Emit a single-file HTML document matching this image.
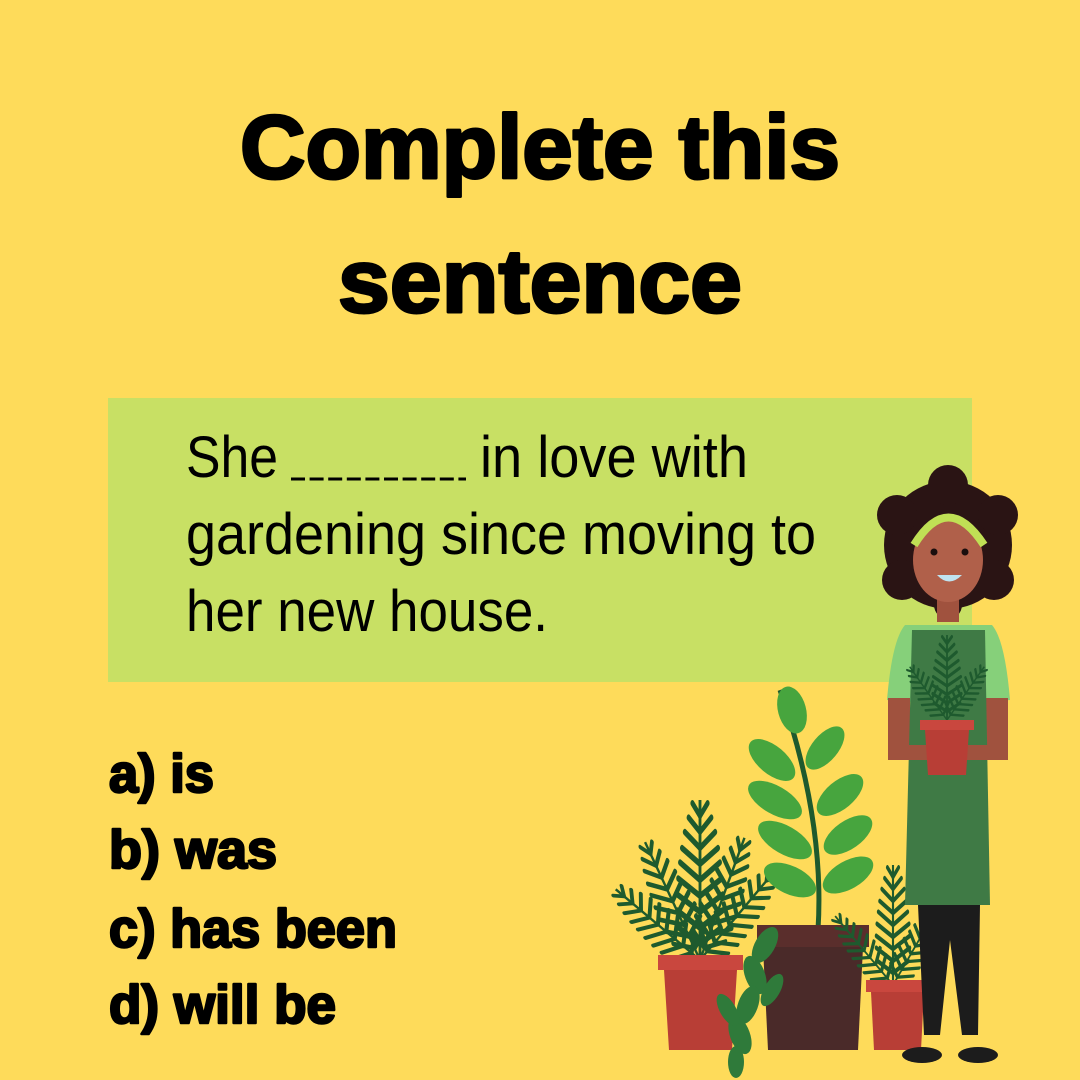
<!DOCTYPE html>
<html><head><meta charset="utf-8"><style>
html,body{margin:0;padding:0;background:#FEDB5A;}
svg{display:block}
</style></head><body>
<svg width="1080" height="1080" viewBox="0 0 1080 1080" xmlns="http://www.w3.org/2000/svg">
<defs>
<g id="frond">
<path d="M0 0 L0 -100" stroke="#1E5A2E" stroke-width="3" fill="none"/>
<g stroke="#1E5A2E" stroke-width="4" stroke-linecap="round">
<path d="M0 -10 l-22 -10 M0 -20 l-24 -11 M0 -30 l-24 -11 M0 -40 l-23 -11 M0 -50 l-21 -11 M0 -60 l-19 -10 M0 -70 l-16 -10 M0 -80 l-12 -9 M0 -90 l-8 -8"/>
<path d="M0 -10 l22 -10 M0 -20 l24 -11 M0 -30 l24 -11 M0 -40 l23 -11 M0 -50 l21 -11 M0 -60 l19 -10 M0 -70 l16 -10 M0 -80 l12 -9 M0 -90 l8 -8"/>
</g>
</g>
</defs>
<rect width="1080" height="1080" fill="#FEDB5A"/>
<g font-family="Liberation Sans, sans-serif" font-weight="bold" fill="#000" stroke="#000" stroke-width="3" stroke-linejoin="round">
<text x="240" y="178" font-size="90" textLength="600" lengthAdjust="spacingAndGlyphs">Complete this</text>
<text x="338" y="312" font-size="90" textLength="404" lengthAdjust="spacingAndGlyphs">sentence</text>
</g>
<rect x="108" y="398" width="864" height="284" fill="#C8E064"/>
<g font-family="Liberation Sans, sans-serif" font-size="58" fill="#000">
<text x="186" y="477" textLength="92" lengthAdjust="spacingAndGlyphs">She</text>
<text x="480" y="477" textLength="268" lengthAdjust="spacingAndGlyphs">in love with</text>
<text x="186" y="554" textLength="630" lengthAdjust="spacingAndGlyphs">gardening since moving to</text>
<text x="186" y="631" textLength="362" lengthAdjust="spacingAndGlyphs">her new house.</text>
</g>
<line x1="291" y1="479" x2="466" y2="479" stroke="#000" stroke-width="3" stroke-dasharray="14 4.6"/>
<g font-family="Liberation Sans, sans-serif" font-weight="bold" font-size="54" fill="#000" stroke="#000" stroke-width="2.5" stroke-linejoin="round">
<text x="109" y="792" textLength="105" lengthAdjust="spacingAndGlyphs">a) is</text>
<text x="109" y="868" textLength="168" lengthAdjust="spacingAndGlyphs">b) was</text>
<text x="109" y="947" textLength="288" lengthAdjust="spacingAndGlyphs">c) has been</text>
<text x="109" y="1023" textLength="227" lengthAdjust="spacingAndGlyphs">d) will be</text>
</g>

<!-- left palm -->
<use href="#frond" transform="translate(700 960) scale(0.95 1.6)"/>
<use href="#frond" transform="translate(700 960) rotate(-50) scale(0.8 1.1)"/>
<use href="#frond" transform="translate(700 960) rotate(40) scale(0.8 1.15)"/>
<use href="#frond" transform="translate(700 960) rotate(-25) scale(0.8 1.3)"/>
<use href="#frond" transform="translate(700 960) rotate(20) scale(0.8 1.3)"/>
<!-- left pot -->
<rect x="658" y="955" width="85" height="15" fill="#C9473E"/>
<path d="M664 970 L737 970 L732 1050 L669 1050Z" fill="#B83E36"/>
<!-- fiddle plant -->
<path d="M818 930 Q825 820 780 690" stroke="#1E5A2E" stroke-width="5" fill="none"/>
<g fill="#47A53E">
<ellipse cx="792" cy="710" rx="14" ry="24" transform="rotate(-15 792 710)"/>
<ellipse cx="772" cy="760" rx="14" ry="28" transform="rotate(-50 772 760)"/>
<ellipse cx="825" cy="748" rx="13" ry="26" transform="rotate(40 825 748)"/>
<ellipse cx="775" cy="800" rx="14" ry="30" transform="rotate(-60 775 800)"/>
<ellipse cx="840" cy="795" rx="14" ry="28" transform="rotate(50 840 795)"/>
<ellipse cx="785" cy="840" rx="14" ry="30" transform="rotate(-60 785 840)"/>
<ellipse cx="848" cy="835" rx="14" ry="28" transform="rotate(55 848 835)"/>
<ellipse cx="790" cy="880" rx="14" ry="28" transform="rotate(-65 790 880)"/>
<ellipse cx="848" cy="875" rx="14" ry="28" transform="rotate(60 848 875)"/>
</g>
<!-- dark pot -->
<rect x="757" y="925" width="112" height="22" fill="#5A2E2C"/>
<path d="M763 947 L863 947 L858 1050 L768 1050Z" fill="#4A2A29"/>
<!-- trailing vine -->
<g fill="#2F7A3A">
<ellipse cx="765" cy="945" rx="10" ry="20" transform="rotate(30 765 945)"/>
<ellipse cx="755" cy="975" rx="10" ry="20" transform="rotate(-20 755 975)"/>
<ellipse cx="748" cy="1005" rx="10" ry="20" transform="rotate(20 748 1005)"/>
<ellipse cx="740" cy="1035" rx="10" ry="20" transform="rotate(-20 740 1035)"/>
<ellipse cx="736" cy="1062" rx="8" ry="16"/>
<ellipse cx="772" cy="990" rx="8" ry="18" transform="rotate(30 772 990)"/>
<ellipse cx="728" cy="1010" rx="8" ry="18" transform="rotate(-30 728 1010)"/>
</g>
<!-- right palm -->
<use href="#frond" transform="translate(893 985) scale(0.7 1.2)"/>
<use href="#frond" transform="translate(893 985) rotate(-40) scale(0.6 0.9)"/>
<use href="#frond" transform="translate(893 985) rotate(30) scale(0.6 0.9)"/>
<rect x="866" y="980" width="62" height="12" fill="#C9473E"/>
<path d="M871 992 L924 992 L921 1050 L874 1050Z" fill="#B83E36"/>

<!-- woman -->
<circle cx="948" cy="545" r="64" fill="#2A1414"/>
<circle cx="897" cy="515" r="20" fill="#2A1414"/><circle cx="998" cy="515" r="20" fill="#2A1414"/>
<circle cx="902" cy="580" r="20" fill="#2A1414"/><circle cx="994" cy="580" r="20" fill="#2A1414"/>
<circle cx="948" cy="485" r="20" fill="#2A1414"/><circle cx="948" cy="605" r="14" fill="#2A1414"/>
<rect x="937" y="590" width="22" height="32" fill="#A0523E"/>
<ellipse cx="948" cy="560" rx="35" ry="42" fill="#B0604A"/>
<path d="M914 545 Q948 490 984 545" stroke="#C0E055" stroke-width="8" fill="none"/>
<circle cx="934" cy="552" r="3.5" fill="#1A0E0E"/><circle cx="965" cy="552" r="3.5" fill="#1A0E0E"/>
<path d="M937 575 Q949 588 962 575Z" fill="#BFE3F0"/>
<!-- shirt -->
<path d="M905 625 L992 625 Q1005 640 1010 700 L985 702 L985 640 L912 640 L912 702 L887 700 Q892 640 905 625Z" fill="#86D07A"/>
<!-- arms -->
<rect x="888" y="698" width="22" height="62" fill="#A0523E"/>
<rect x="986" y="698" width="22" height="62" fill="#A0523E"/>
<!-- apron -->
<path d="M912 630 L985 630 L990 905 L905 905Z" fill="#3F7A45"/>
<!-- pants -->
<path d="M918 905 L980 905 L978 1035 L962 1035 L950 940 L940 1035 L924 1035Z" fill="#1C1C1C"/>
<ellipse cx="922" cy="1055" rx="20" ry="8" fill="#1C1C1C"/><ellipse cx="978" cy="1055" rx="20" ry="8" fill="#1C1C1C"/>
<!-- hands pot -->
<path d="M895 745 L1000 745 L1000 760 L895 760Z" fill="#A0523E"/>
<use href="#frond" transform="translate(947 720) scale(0.6 0.85)"/>
<use href="#frond" transform="translate(947 720) rotate(-35) scale(0.5 0.65)"/>
<use href="#frond" transform="translate(947 720) rotate(35) scale(0.5 0.65)"/>
<rect x="920" y="720" width="54" height="10" fill="#C9473E"/>
<path d="M925 730 L969 730 L966 775 L928 775Z" fill="#B83E36"/>
</svg>
</body></html>
